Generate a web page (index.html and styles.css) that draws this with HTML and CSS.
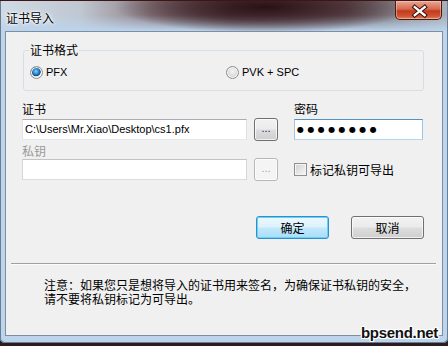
FILE: index.html
```html
<!DOCTYPE html>
<html>
<head>
  <title>证书导入</title>
  <link rel="stylesheet" href="styles.css">
</head>
<body>
  <div class="window">
    <div class="titlebar">
      <span class="title">证书导入</span>
      <div class="close">
        <svg viewBox="0 0 47 20" width="47" height="19">
          <path d="M18.5 6.5 L29 15 M29 6.5 L18.5 15" stroke="#3b140c" stroke-width="4.6" stroke-linecap="square"/>
          <path d="M18.5 6.5 L29 15 M29 6.5 L18.5 15" stroke="#ffffff" stroke-width="2.4" stroke-linecap="square"/>
        </svg>
      </div>
    </div>

    <div class="client">
      <fieldset class="group">
        <legend>证书格式</legend>
        <label class="radio first"><span class="radio-mark checked"></span>PFX</label>
        <label class="radio"><span class="radio-mark"></span>PVK + SPC</label>
      </fieldset>

      <div class="form">
        <div class="label cert-label">证书</div>
        <div class="label pw-label">密码</div>
        <div class="textbox cert-path">C:\Users\Mr.Xiao\Desktop\cs1.pfx</div>
        <div class="browse cert-browse">...</div>
        <div class="textbox password">●●●●●●●●</div>
        <div class="label key-label disabled">私钥</div>
        <div class="textbox key-path disabled"></div>
        <div class="browse key-browse disabled">...</div>
        <label class="check"><span class="box"></span>标记私钥可导出</label>
      </div>

      <div class="actions">
        <div class="btn default">确定</div>
        <div class="btn">取消</div>
      </div>

      <div class="separator"></div>

      <p class="note">注意：如果您只是想将导入的证书用来签名，为确保证书私钥的安全，<br>请不要将私钥标记为可导出。</p>
    </div>

    <div class="watermark">bpsend.net</div>
  </div>
</body>
</html>
```

FILE: styles.css
```css
* {
  margin: 0;
  padding: 0;
  box-sizing: border-box;
}

body {
  width: 448px;
  height: 346px;
  background: #2a1c1f;
  overflow: hidden;
  font-family: "Noto Sans CJK SC", sans-serif;
  font-size: 12px;
  color: #000;
}

.window {
  position: relative;
  width: 448px;
  height: 343px;
  display: flex;
  flex-direction: column;
  padding: 0 5px 7px;
  border-radius: 0 0 5px 5px;
  border-top: 1px solid #3e1614;
  background:
    radial-gradient(ellipse 150px 26px at 265px 6px, rgba(38, 14, 18, 0.95), rgba(60, 32, 38, 0.7) 50%, rgba(90, 70, 80, 0) 100%),
    linear-gradient(to bottom, rgba(190, 212, 234, 0) 0, rgba(190, 212, 234, 0) 14px, #bcd4ec 30px),
    linear-gradient(to right, #cfdbe6 0, #bfc7d1 18%, #8c7c82 34%, #5c474b 52%, #6d5f63 78%, #a9b2bc 100%);
  box-shadow: inset 1px 0 0 #6a7c90, inset -1px 0 0 #6a7c90, inset 0 -1px 0 #6a7c90;
}

.titlebar {
  height: 30px;
  display: flex;
  justify-content: space-between;
  align-items: flex-start;
}

.title {
  margin: 10px 0 0 1px;
  line-height: 14px;
  font-size: 12px;
  text-shadow: 0 0 5px #fff, 0 0 3px #fff, 0 0 2px #fff;
}

.close {
  width: 47px;
  height: 19px;
  margin-right: 1px;
  border: 1px solid #4a1a12;
  border-top: none;
  border-radius: 0 0 5px 5px;
  background: linear-gradient(to bottom, #e9a795 0, #d5694f 45%, #c23a1d 55%, #cf5634 85%, #e58a62 100%);
  box-shadow: inset 0 0 0 1px rgba(255, 220, 210, 0.45);
}

.close svg {
  display: block;
}

.client {
  flex: 1;
  background: #f0f0f0;
  border: 1px solid #7d8fa3;
}

/* group box */
.group {
  margin: 11px 18px 0 17px;
  height: 48px;
  border: 1px solid #d5dfe5;
  border-radius: 3px;
  padding: 9px 6px 0;
  display: flex;
  align-items: flex-start;
}

.group legend {
  padding: 0 1px;
  margin-left: -1px;
  line-height: 14px;
  font-size: 12px;
}

.radio {
  display: flex;
  align-items: center;
  font-family: "Liberation Sans", sans-serif;
  font-size: 11px;
  line-height: 13px;
  color: #000;
}

.radio.first {
  width: 196px;
}

.radio-mark {
  width: 13px;
  height: 13px;
  margin-right: 3px;
  border-radius: 50%;
  border: 1px solid #8e8f8f;
  background: radial-gradient(circle at 50% 40%, #f4f4f4 0, #d4d4d4 70%, #c6c6c6 100%);
  box-shadow: inset 0 0 0 1px #f6f6f6;
}

.radio-mark.checked {
  background: radial-gradient(circle at 45% 40%, #8ad0f5 0, #2f8ad4 30%, #14487f 50%, #e6e6e6 58%, #d8d8d8 100%);
}

/* fields */
.form {
  margin: 11px 0 0 16px;
  display: grid;
  grid-template-columns: 225px 7px 24px 16px 129px;
  grid-template-rows: 16px 23px 17px 23px;
}

.label {
  line-height: 14px;
  font-size: 12px;
}

.cert-label {
  grid-area: 1 / 1;
  align-self: start;
}

.pw-label {
  grid-area: 1 / 5;
  align-self: start;
}

.key-label {
  grid-area: 3 / 1;
  align-self: end;
}

.label.disabled {
  color: #9a9a9a;
}

.textbox {
  height: 21px;
  align-self: center;
  background: #fff;
  border: 1px solid;
  border-color: #abadb3 #dbdfe6 #e3e9ef #e2e3ea;
  padding: 0 2px;
  font-family: "Liberation Sans", sans-serif;
  font-size: 11px;
  line-height: 19px;
  white-space: nowrap;
  overflow: hidden;
}

.cert-path {
  grid-area: 2 / 1;
}

.key-path {
  grid-area: 4 / 1;
}

.textbox.disabled {
  border-color: #c3c3c3 #d6d6d6 #dcdcdc #d6d6d6;
}

.password {
  grid-area: 2 / 5;
  border-color: #5592c2 #9cc6e6 #b5d6ee #9cc6e6;
  font-family: "DejaVu Sans", sans-serif;
  font-size: 8px;
  letter-spacing: 3.4px;
  padding-left: 2px;
}

.browse {
  width: 24px;
  height: 23px;
  border: 1px solid #707070;
  border-radius: 3px;
  background: linear-gradient(to bottom, #f2f2f2 0, #ebebeb 48%, #dddddd 52%, #cfcfcf 100%);
  box-shadow: inset 0 0 0 1px rgba(255, 255, 255, 0.7);
  text-align: center;
  font-family: "Liberation Sans", sans-serif;
  font-size: 11px;
  line-height: 19px;
  color: #1a1a4a;
}

.cert-browse {
  grid-area: 2 / 3;
}

.key-browse {
  grid-area: 4 / 3;
}

.browse.disabled {
  border-color: #b5b8ba;
  background: #f4f4f4;
  color: #a5a5a5;
}

.check {
  grid-area: 4 / 5;
  align-self: center;
  display: flex;
  align-items: center;
  line-height: 14px;
  font-size: 12px;
}

.check .box {
  width: 13px;
  height: 13px;
  margin-right: 3px;
  border: 1px solid #8e8f8f;
  background: linear-gradient(135deg, #d0d0d0 0, #e8e8e8 60%, #f6f6f6 100%);
  box-shadow: inset 0 0 0 1px #f4f4f4;
}

/* buttons */
.actions {
  margin: 35px 18px 0 0;
  display: flex;
  justify-content: flex-end;
  gap: 22px;
}

.btn {
  width: 73px;
  height: 23px;
  border: 1px solid #707070;
  border-radius: 3px;
  background: linear-gradient(to bottom, #f2f2f2 0, #ebebeb 48%, #dddddd 52%, #cfcfcf 100%);
  box-shadow: inset 0 0 0 1px rgba(255, 255, 255, 0.7);
  text-align: center;
  font-size: 12px;
  line-height: 21px;
}

.btn.default {
  border-color: #2c8fd0;
  background: linear-gradient(to bottom, #ecf8fe 0, #dcf2fd 48%, #c2e8fc 52%, #a9ddf7 100%);
  box-shadow: inset 0 0 0 1px #6cd0f7;
}

.separator {
  margin: 24px 6px 0 5px;
  border-top: 1px solid #a0a0a0;
  border-bottom: 1px solid #fcfcfc;
}

.note {
  margin: 13px 0 0 38px;
  font-size: 12px;
  line-height: 14px;
}

.watermark {
  position: absolute;
  right: 10px;
  bottom: 2px;
  font-family: "Liberation Sans", sans-serif;
  font-weight: bold;
  font-size: 15px;
  line-height: 16px;
  letter-spacing: -0.3px;
  color: #111;
  text-shadow: 1px 0 0 #fff, -1px 0 0 #fff, 0 1px 0 #fff, 0 -1px 0 #fff, 1px 1px 0 #fff, -1px -1px 0 #fff, 1px -1px 0 #fff, -1px 1px 0 #fff;
}
```
